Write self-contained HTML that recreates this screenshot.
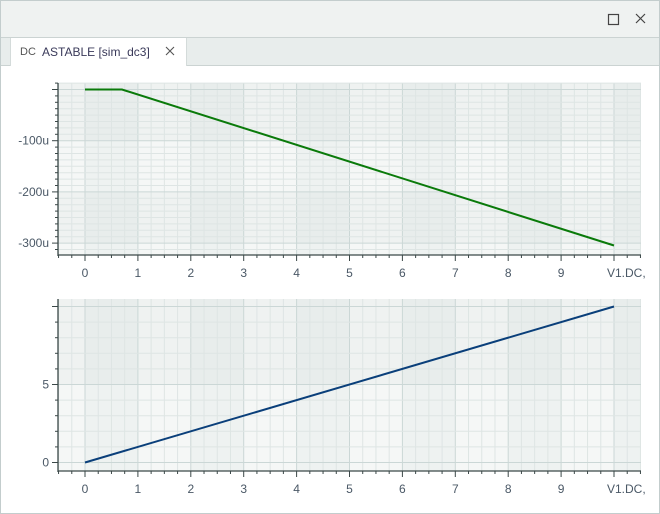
<!DOCTYPE html>
<html><head><meta charset="utf-8"><style>
html,body{margin:0;padding:0;width:660px;height:514px;overflow:hidden;background:#fff;font-family:"Liberation Sans",sans-serif}
#win{position:absolute;left:0;top:0;width:658px;height:512px;border:1px solid #c3cdcd;background:#fff}
#title{position:absolute;left:0;top:0;width:658px;height:36px;background:#eff2f1;border-bottom:1px solid #cbd3d2}
#tabs{position:absolute;left:0;top:37px;width:658px;height:27px;background:#e8edec;border-bottom:1px solid #cbd3d2}
#tab{position:absolute;left:9px;top:0;width:175px;height:28px;background:#fff;border-left:1px solid #d4dbda;border-right:1px solid #d4dbda;font-size:12px;color:#333}
svg{position:absolute;left:0;top:0}
</style></head><body>
<div id="win">
<div id="title"></div>
<div id="tabs"><div id="tab">
<span style="position:absolute;left:9px;top:8px;font-size:11px;color:#555">DC</span>
<span style="position:absolute;left:31px;top:7px;color:#3a3a5a">ASTABLE [sim_dc3]</span>
</div></div>
</div>
<svg id="s" width="660" height="514" xmlns="http://www.w3.org/2000/svg">
<rect x="608.5" y="14.5" width="10" height="10" fill="none" stroke="#444" stroke-width="1.2"/>
<path d="M636 14L645 23M645 14L636 23" stroke="#444" stroke-width="1.2"/>
<path d="M166 47L174 55M174 47L166 55" stroke="#555" stroke-width="1.1"/>
</svg>
<script>
var s=document.getElementById('s'),h='';
function X(v){return 85+v*52.9}
function plot(top,bot,yf,ymin,ymax,minorStep,bandStep,labels,bandsStart){
  var L=58,R=641;
  h+='<rect x="'+L+'" y="'+top+'" width="'+(R-L)+'" height="'+(bot-top)+'" fill="#f5f7f6"/>';
  for(var i=0;i<=10;i+=2){var x0=Math.max(L,X(i)),x1=Math.min(R,X(i+1));h+='<rect x="'+x0+'" y="'+top+'" width="'+(x1-x0)+'" height="'+(bot-top)+'" fill="rgba(120,150,150,0.05)"/>';}
  bandsStart.forEach(function(b){var y0=Math.max(top,yf(b[0])),y1=Math.min(bot,yf(b[1]));h+='<rect x="'+L+'" y="'+y0+'" width="'+(R-L)+'" height="'+(y1-y0)+'" fill="rgba(120,150,150,0.045)"/>';});
  for(var v=-0.5;v<=10.5;v+=0.25){var x=X(v);if(x<L||x>R)continue;var mj=Math.abs(v-Math.round(v))<1e-6;
    h+='<line x1="'+x+'" y1="'+top+'" x2="'+x+'" y2="'+bot+'" stroke="'+(mj?'#cbd7d6':'#dee5e4')+'" stroke-width="1"/>';
    h+='<line x1="'+x+'" y1="'+bot+'" x2="'+x+'" y2="'+(bot+(mj?6:3))+'" stroke="#3b4848" stroke-width="1"/>';}
  for(var v=ymin;v<=ymax+1e-9;v+=minorStep){var y=yf(v);if(y<top||y>bot)continue;var mj=Math.abs(v/bandStep-Math.round(v/bandStep))<1e-6;
    h+='<line x1="'+L+'" y1="'+y+'" x2="'+R+'" y2="'+y+'" stroke="'+(mj?'#cbd7d6':'#dee5e4')+'" stroke-width="1"/>';
    h+='<line x1="'+(L-(mj?6:3))+'" y1="'+y+'" x2="'+L+'" y2="'+y+'" stroke="#3b4848" stroke-width="1"/>';}
  h+='<line x1="'+L+'" y1="'+top+'" x2="'+L+'" y2="'+(bot+1)+'" stroke="#3b4848" stroke-width="1.3"/>';
  h+='<line x1="'+L+'" y1="'+bot+'" x2="'+R+'" y2="'+bot+'" stroke="#3b4848" stroke-width="1.3"/>';
  for(var i=0;i<10;i++)h+='<text x="'+X(i)+'" y="'+(bot+22)+'" font-size="12" fill="#4a5866" text-anchor="middle" font-family="Liberation Sans">'+i+'</text>';
  h+='<text x="607" y="'+(bot+22)+'" font-size="12" fill="#4a5866" font-family="Liberation Sans">V1.DC,</text>';
  labels.forEach(function(l){h+='<text x="49" y="'+(yf(l[0])+4)+'" font-size="12" fill="#4a5866" text-anchor="end" font-family="Liberation Sans">'+l[1]+'</text>';});
}
var y1=function(v){return 89.5-v*0.512};
plot(83,255,y1,-325,25,12.5,100,[[-100,'-100u'],[-200,'-200u'],[-300,'-300u']],[[25,-100],[-200,-300]]);
h+='<polyline points="85,89.5 122,89.5 614,245.5" fill="none" stroke="#0a7a0a" stroke-width="2"/>';
var y2=function(v){return 462.5-v*15.6};
plot(299,471,y2,-1,11,1,5,[[0,'0'],[5,'5']],[[10.5,5]]);
h+='<line x1="85" y1="462.5" x2="614" y2="306.5" stroke="#0a3f7a" stroke-width="2"/>';
s.innerHTML+=h;
</script>
</body></html>
